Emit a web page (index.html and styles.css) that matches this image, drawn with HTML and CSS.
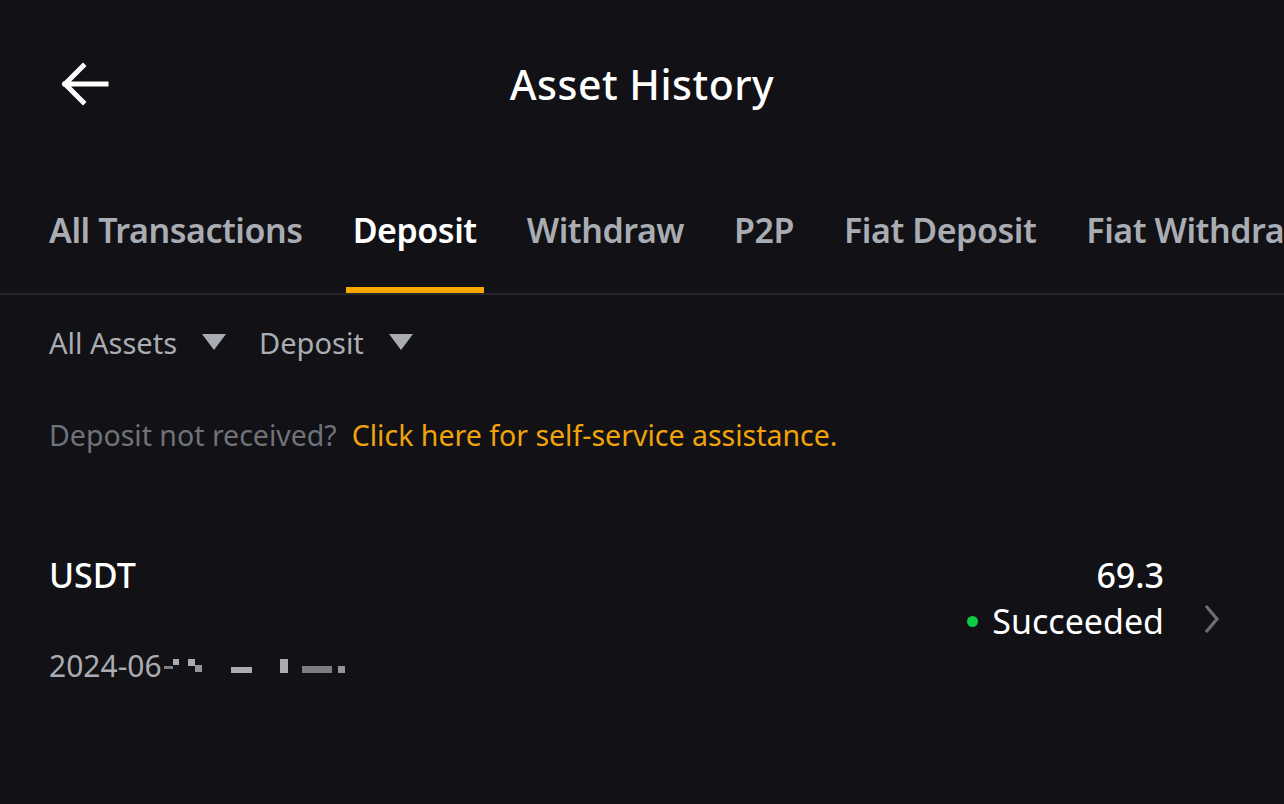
FILE: index.html
```html
<!DOCTYPE html>
<html>
<head>
<meta charset="utf-8">
<link rel="stylesheet" href="styles.css">
</head>
<body>
<div class="page">
  <header class="topbar">
    <svg class="back" width="52" height="52" viewBox="0 0 52 52"><path d="M49 26 H8 M26 8 L8 26 L26 44" fill="none" stroke="#fff" stroke-width="5" stroke-linecap="square"/></svg>
    <h1 class="title">Asset History</h1>
  </header>
  <nav class="tabs">
    <div class="tab">All Transactions</div>
    <div class="tab active">Deposit</div>
    <div class="tab">Withdraw</div>
    <div class="tab">P2P</div>
    <div class="tab">Fiat Deposit</div>
    <div class="tab">Fiat Withdraw</div>
  </nav>
  <div class="filters">
    <div class="filter">All Assets <span class="tri"></span></div>
    <div class="filter">Deposit <span class="tri"></span></div>
  </div>
  <p class="notice"><span class="muted">Deposit not received?</span><span class="link">Click here for self-service assistance.</span></p>
  <div class="record">
    <div class="rec-left">
      <div class="coin">USDT</div>
      <div class="date">2024-06<span class="redact"><i class="r0"></i><i class="r1"></i><i class="r2"></i><i class="r3"></i><i class="r4"></i><i class="r5"></i><i class="r6"></i><i class="r7"></i></span></div>
    </div>
    <div class="rec-right">
      <div class="amount">69.3</div>
      <div class="status"><span class="dot"></span>Succeeded</div>
    </div>
    <svg class="chev" width="20" height="32" viewBox="0 0 20 32"><path d="M4 3 L15 16 L4 29" fill="none" stroke="#6b6e74" stroke-width="3.2"/></svg>
  </div>
</div>
</body>
</html>
```
FILE: styles.css
```css
* { box-sizing: border-box; }
html, body { margin: 0; padding: 0; }
body {
  background: #111116;
  font-family: "Noto Sans", "Open Sans", sans-serif;
  color: #fff;
  width: 1284px;
  height: 804px;
  overflow: hidden;
}
.page { width: 1284px; }
.topbar {
  position: relative;
  height: 170px;
  display: flex;
  justify-content: center;
  align-items: flex-start;
  padding-top: 54px;
}
.back { position: absolute; left: 57px; top: 58px; }
.title {
  margin: 0;
  font-size: 41px;
  font-weight: 500;
  letter-spacing: 0.5px;
  line-height: 60px;
}
.tabs {
  display: flex;
  gap: 50px;
  padding-left: 49px;
  height: 125px;
  border-bottom: 2px solid #26262b;
  white-space: nowrap;
  overflow: hidden;
}
.tab {
  font-size: 34px;
  font-weight: 600;
  color: #a9adb3;
  line-height: 120px;
  height: 123px;
  position: relative;
  letter-spacing: -0.45px;
  flex-shrink: 0;
}
.tab.active { color: #fff; }
.tab.active::after {
  content: "";
  position: absolute;
  left: -7px;
  right: -7px;
  bottom: 0;
  height: 6px;
  background: #f6a801;
}
.filters {
  display: flex;
  gap: 33px;
  padding-left: 49px;
  height: 94px;
  align-items: center;
}
.filter {
  font-size: 29px;
  color: #a9adb3;
  display: flex;
  align-items: center;
  gap: 25px;
}
.tri {
  width: 0; height: 0;
  border-left: 12px solid transparent;
  border-right: 12px solid transparent;
  border-top: 16px solid #a9adb3;
}
.notice {
  margin: 26px 0 0 0;
  padding-left: 49px;
  font-size: 28.5px;
  line-height: 40px;
  display: flex;
  gap: 15px;
}
.muted { color: #6f7379; }
.link { color: #f0a30b; }
.record {
  display: flex;
  align-items: flex-start;
  padding: 0 0 0 49px;
  margin-top: 100px;
}
.rec-left { flex: 1; }
.coin { font-size: 34px; font-weight: 500; line-height: 40px; }
.date { font-size: 30px; color: #a9adb3; line-height: 40px; margin-top: 51px; display: flex; align-items: center; }
.redact { position: relative; width: 190px; height: 30px; }
.redact i { position: absolute; background: #a9adb3; }
.r0 { left: 2px; top: 15px; width: 9px; height: 3px; opacity: .7; }
.r1 { left: 11px; top: 8px; width: 6px; height: 6px; }
.r2 { left: 26px; top: 8px; width: 7px; height: 7px; }
.r3 { left: 33px; top: 14px; width: 7px; height: 7px; opacity: .85; }
.r4 { left: 69px; top: 16px; width: 21px; height: 6px; }
.r5 { left: 118px; top: 8px; width: 8px; height: 14px; }
.r6 { left: 140px; top: 15px; width: 30px; height: 7px; opacity: .7; }
.r7 { left: 176px; top: 15px; width: 7px; height: 7px; opacity: .85; }
.rec-right { display: flex; flex-direction: column; align-items: flex-end; }
.amount { font-size: 34px; font-weight: 500; line-height: 40px; }
.status { font-size: 34px; line-height: 40px; margin-top: 6px; display: flex; align-items: center; }
.dot { width: 11px; height: 11px; border-radius: 50%; background: #0ecb45; margin-right: 14px; }
.chev { margin-left: 38px; margin-right: 62px; margin-top: 48px; }
```
